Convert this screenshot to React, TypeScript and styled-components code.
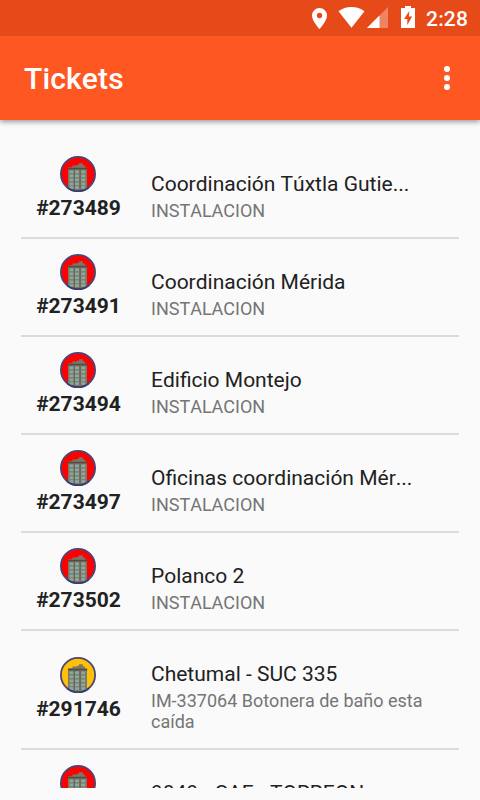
import React from "react";
import styled, { createGlobalStyle } from "styled-components";

const GlobalStyle = createGlobalStyle`
  * { box-sizing: border-box; }
  html, body { margin: 0; padding: 0; overflow: hidden; background: #fafafa; }
  body { font-family: Roboto, sans-serif; font-kerning: none; }
`;

const Screen = styled.div`
  width: 480px;
  height: 800px;
  display: flex;
  flex-direction: column;
  background: #fafafa;
  color: #212121;
  overflow: hidden;
`;

const StatusBar = styled.div`
  height: 36px;
  flex: none;
  display: flex;
  justify-content: flex-end;
  background: #e64a19;
  z-index: 2;
`;

const StatusIcons = styled.svg`
  width: 116px;
  height: 36px;
  display: block;
`;

const Clock = styled.span`
  width: 54px;
  padding-top: 1px;
  color: #fff;
  font-size: 21px;
  font-weight: 500;
  letter-spacing: 0.2px;
  line-height: 37px;
  white-space: nowrap;
`;

const AppBar = styled.header`
  height: 84px;
  flex: none;
  display: flex;
  align-items: center;
  justify-content: space-between;
  padding: 0 24px;
  background: #ff5722;
  color: #fff;
  z-index: 1;
  box-shadow: 0 2px 5px rgba(0, 0, 0, 0.38);
`;

const Title = styled.h1`
  margin: 0;
  padding-top: 2px;
  font-size: 30px;
  font-weight: 500;
  letter-spacing: 0.15px;
  line-height: 36px;
`;

const MenuButton = styled.button`
  display: flex;
  padding: 0;
  border: 0;
  margin-right: 6px;
  background: none;
`;

const List = styled.ul`
  list-style: none;
  margin: 21px 21px 12px;
  padding: 0;
  height: 647px;
  flex: none;
  overflow: hidden;
`;

const Row = styled.li<{ $tall?: boolean }>`
  height: ${(p) => (p.$tall ? 119 : 98)}px;
  display: flex;
  align-items: center;
  border-bottom: 2px solid #dbdbdb;
`;

const Identity = styled.div`
  width: 114px;
  height: 66px;
  display: flex;
  flex-direction: column;
  align-items: center;
`;

const Badge = styled.svg`
  width: 36px;
  height: 36px;
  flex: none;
  display: block;
`;

const TicketId = styled.span`
  padding: 4px 0 0 1px;
  font-size: 21px;
  font-weight: 700;
  line-height: 25px;
`;

const Details = styled.div`
  width: 290px;
  margin-left: 16px;
  padding-top: 15px;
`;

const Name = styled.div`
  font-size: 21px;
  line-height: 25px;
  white-space: nowrap;
`;

const Kind = styled.div`
  margin-top: 3px;
  color: #757575;
  font-size: 18px;
  line-height: 21px;
`;

type Ticket = { id: string; name: string; kind: string; color: string; tall?: boolean };

const RED = "#ff0000";
const AMBER = "#ffc107";

const tickets: Ticket[] = [
  { id: "#273489", name: "Coordinación Túxtla Gutie...", kind: "INSTALACION", color: RED },
  { id: "#273491", name: "Coordinación Mérida", kind: "INSTALACION", color: RED },
  { id: "#273494", name: "Edificio Montejo", kind: "INSTALACION", color: RED },
  { id: "#273497", name: "Oficinas coordinación Mér...", kind: "INSTALACION", color: RED },
  { id: "#273502", name: "Polanco 2", kind: "INSTALACION", color: RED },
  { id: "#291746", name: "Chetumal - SUC 335", kind: "IM-337064 Botonera de baño esta caída", color: AMBER, tall: true },
  { id: "#291750", name: "9849 - CAE - TORREON", kind: "INSTALACION", color: RED },
];

const windowRows = [14.5, 18.5, 22.5, 26.5, 30.2];
const windowCols = [9.6, 15, 21.2];

function BuildingBadge({ color }: { color: string }) {
  return (
    <Badge viewBox="0 0 36 36">
      <circle cx="18" cy="18" r="17.1" fill={color} stroke="#4d4478" strokeWidth="1.8" />
      <path d="M8 13h19v19.5q-9 3-19 0z" fill="#7c786c" />
      <path d="M12.5 11V9.5H17V8.7h2V7.3h3.800v2.200H25V11.500h2v2H8V11.500z" fill="#7a776a" />
      <path d="M8 11.800h19.200v1.600H8z" fill="#554a40" />
      {windowRows.map((y) =>
        windowCols.map((x) => (
          <rect key={`${x}-${y}`} x={x} y={y} width="4" height="2.7" fill="#84ab9d" />
        )),
      )}
      <path d="M14.300 14v19M20.100 14v19" stroke="#705b50" strokeWidth="1" />
      <path d="M7 31.300a17.100 17.100 0 0 0 22 0" fill="none" stroke="#37406f" strokeWidth="1.800" />
    </Badge>
  );
}

export default function App() {
  return (
    <Screen>
      <GlobalStyle />
      <StatusBar>
        <StatusIcons viewBox="310 0 116 36" fill="#fff">
          <path
            fillRule="evenodd"
            d="M319.500 8a7.500 7.500 0 0 0-7.500 7.500c0 5.500 7.500 13.500 7.500 13.500s7.500-8 7.500-13.500a7.500 7.500 0 0 0-7.500-7.500zm0 4.800a2.700 2.700 0 1 1 0 5.400 2.700 2.700 0 0 1 0-5.400z"
          />
          <path d="M338.500 11.300C345.500 5.600 357.500 5.600 364.500 11.300L351.500 27.700z" />
          <path d="M388 7v21h-21z" fillOpacity=".32" />
          <path d="M379.500 15.500V28H367z" />
          <path
            fillRule="evenodd"
            d="M401 8h4V6h6v2h4v20h-14zM409.300 11l-5.300 8h3.300v6l4.900-8.500h-3.300z"
          />
        </StatusIcons>
        <Clock>2:28</Clock>
      </StatusBar>
      <AppBar>
        <Title>Tickets</Title>
        <MenuButton aria-label="Más opciones">
          <svg width="6" height="24" viewBox="0 0 6 24" fill="#fff">
            <circle cx="3" cy="3" r="3" />
            <circle cx="3" cy="12" r="3" />
            <circle cx="3" cy="21" r="3" />
          </svg>
        </MenuButton>
      </AppBar>
      <List>
        {tickets.map((t) => (
          <Row key={t.id} $tall={t.tall}>
            <Identity>
              <BuildingBadge color={t.color} />
              <TicketId>{t.id}</TicketId>
            </Identity>
            <Details>
              <Name>{t.name}</Name>
              <Kind>{t.kind}</Kind>
            </Details>
          </Row>
        ))}
      </List>
    </Screen>
  );
}
